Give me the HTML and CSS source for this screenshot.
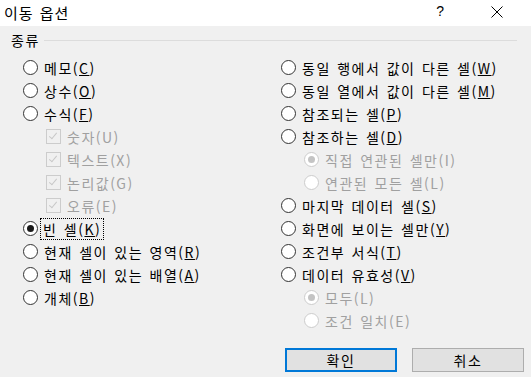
FILE: index.html
```html
<!DOCTYPE html>
<html lang="ko">
<head>
  <meta charset="UTF-8" />
  <title>이동 옵션</title>
  <link rel="stylesheet" href="styles.css">
</head>
<body>

<div class="dialog">
  <div class="titlebar">
    <span class="title">이동 옵션</span>
    <span class="help">?</span>
    <span class="close">
      <svg width="12" height="12" viewBox="0 0 12 12"><path d="M0.5 0.5 L11.5 11.5 M11.5 0.5 L0.5 11.5" stroke="#000" stroke-width="1" fill="none"/></svg>
    </span>
  </div>

  <div class="content">
    <div class="group-head">
      <span>종류</span>
      <div class="rule"></div>
    </div>

    <div class="columns">
      <div class="col">
        <div class="row"><span class="radio"></span><span>메모(<u>C</u>)</span></div>
        <div class="row"><span class="radio"></span><span>상수(<u>O</u>)</span></div>
        <div class="row"><span class="radio"></span><span>수식(<u>F</u>)</span></div>
        <div class="row sub disabled"><span class="check"></span><span>숫자(U)</span></div>
        <div class="row sub disabled"><span class="check"></span><span>텍스트(X)</span></div>
        <div class="row sub disabled"><span class="check"></span><span>논리값(G)</span></div>
        <div class="row sub disabled"><span class="check"></span><span>오류(E)</span></div>
        <div class="row"><span class="radio on"></span><span class="focus">빈 셀(<u>K</u>)</span></div>
        <div class="row"><span class="radio"></span><span>현재 셀이 있는 영역(<u>R</u>)</span></div>
        <div class="row"><span class="radio"></span><span>현재 셀이 있는 배열(<u>A</u>)</span></div>
        <div class="row"><span class="radio"></span><span>개체(<u>B</u>)</span></div>
      </div>

      <div class="col">
        <div class="row"><span class="radio"></span><span>동일 행에서 값이 다른 셀(<u>W</u>)</span></div>
        <div class="row"><span class="radio"></span><span>동일 열에서 값이 다른 셀(<u>M</u>)</span></div>
        <div class="row"><span class="radio"></span><span>참조되는 셀(<u>P</u>)</span></div>
        <div class="row"><span class="radio"></span><span>참조하는 셀(<u>D</u>)</span></div>
        <div class="row sub disabled"><span class="radio on"></span><span>직접 연관된 셀만(I)</span></div>
        <div class="row sub disabled"><span class="radio"></span><span>연관된 모든 셀(L)</span></div>
        <div class="row"><span class="radio"></span><span>마지막 데이터 셀(<u>S</u>)</span></div>
        <div class="row"><span class="radio"></span><span>화면에 보이는 셀만(<u>Y</u>)</span></div>
        <div class="row"><span class="radio"></span><span>조건부 서식(<u>T</u>)</span></div>
        <div class="row"><span class="radio"></span><span>데이터 유효성(<u>V</u>)</span></div>
        <div class="row sub disabled"><span class="radio on"></span><span>모두(L)</span></div>
        <div class="row sub disabled"><span class="radio"></span><span>조건 일치(E)</span></div>
      </div>
    </div>

    <div class="buttons">
      <button class="default">확인</button>
      <button>취소</button>
    </div>
  </div>
</div>

</body>
</html>
```

FILE: styles.css
```css
body {
  margin: 0;
  width: 531px;
  height: 377px;
  overflow: hidden;
  background-color: #f0f0f0;
  font-family: "Noto Sans CJK KR", "Noto Sans", sans-serif;
  font-size: 14px;
  color: #000;
}

.titlebar {
  height: 26px;
  background-color: #fff;
  display: flex;
  align-items: center;
}

.title {
  font-size: 15px;
  margin-left: 4px;
  margin-top: -2px;
  letter-spacing: 1px;
  word-spacing: 1px;
}

.help {
  margin-left: auto;
  font-family: "Liberation Sans", sans-serif;
  font-size: 14px;
  margin-top: -4px;
}

.close {
  display: flex;
  margin-left: 47px;
  margin-right: 28px;
  margin-top: -3px;
}

.content {
  padding: 5px 7px 0 11px;
}

.group-head {
  display: flex;
  align-items: center;
  height: 18px;
  letter-spacing: 1.5px;
}

.rule {
  flex: 1;
  height: 1px;
  background-color: #dcdcdc;
  margin-left: 4px;
  margin-right: 7px;
  margin-top: 1px;
}

.columns {
  display: grid;
  grid-template-columns: 258px 1fr;
  margin-top: 7px;
  padding-left: 12px;
}

.row {
  height: 23px;
  display: flex;
  align-items: center;
  gap: 6px;
  letter-spacing: 1.5px;
  word-spacing: 1px;
  white-space: nowrap;
}

.row.sub {
  padding-left: 23px;
}

.row.disabled {
  color: #a0a0a0;
}

.radio {
  width: 13px;
  height: 13px;
  border: 1px solid #333;
  border-radius: 50%;
  background-color: #fff;
  flex-shrink: 0;
  position: relative;
}

.radio.on::after {
  content: "";
  position: absolute;
  left: 3px;
  top: 3px;
  width: 7px;
  height: 7px;
  border-radius: 50%;
  background-color: #1a1a1a;
}

.disabled .radio {
  border-color: #cccccc;
  background-color: #fff;
}

.disabled .radio.on::after {
  background-color: #c4c4c4;
}

.check {
  width: 13px;
  height: 13px;
  border: 1px solid #cccccc;
  background-color: #f0f0f0;
  flex-shrink: 0;
  position: relative;
}

.check::after {
  content: "";
  position: absolute;
  left: 4px;
  top: 1px;
  width: 3px;
  height: 7px;
  border-right: 1px solid #c8c8c8;
  border-bottom: 1px solid #c8c8c8;
  transform: rotate(40deg);
}

.focus {
  outline: 1px dotted #000;
  outline-offset: 0;
  padding: 0 2px;
  margin-left: -3px;
  line-height: 20px;
}

.buttons {
  display: flex;
  justify-content: flex-end;
  gap: 15px;
  margin-top: 16px;
}

button {
  width: 112px;
  height: 24px;
  background-color: #e1e1e1;
  border: 1px solid #adadad;
  font-family: inherit;
  font-size: 14px;
  letter-spacing: 1.5px;
  color: #000;
  padding: 0;
}

button.default {
  border: 2px solid #0078d7;
}
```
